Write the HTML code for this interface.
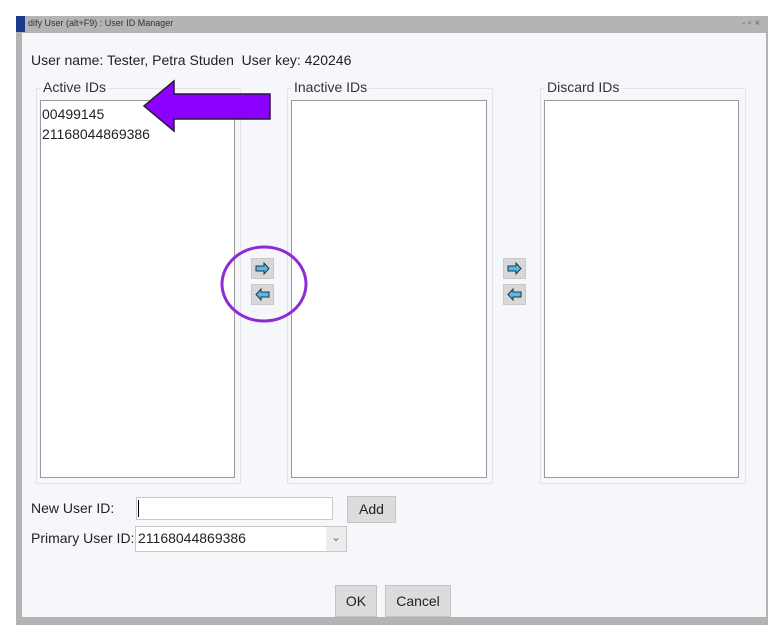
<!DOCTYPE html>
<html><head><style>
*{margin:0;padding:0;box-sizing:border-box}
body{width:775px;height:637px;background:#fff;position:relative;font-family:"Liberation Sans",sans-serif;color:#222;overflow:hidden}
.a{position:absolute}
.win{left:16px;top:16px;width:752px;height:609px;background:#b4b4b4}
.content{left:22px;top:33px;width:744px;height:584px;background:#f6f7fb}
.title{left:28px;top:18px;font-size:9px;color:#333}
.t14{font-size:14px}
.grp{border:1px solid #e2e3e8;border-radius:2px}
.lst{background:#fff;border:1px solid #9a9a9a}
.leg{background:#f6f7fb;padding:0 2px;font-size:14px;color:#333}
.btn{background:#dcdcdc;border:1px solid #c4c4c4;font-size:14px;text-align:center}
.ab{background:#d8d8d8;border:1px solid #c8c8c8;width:22px;height:20px}
</style></head><body>
<div class="a win"></div>
<div class="a" style="left:16px;top:16px;width:9px;height:16px;background:#1b3b8a"></div>
<div class="a content"></div>
<div class="a title">dify User (alt+F9) : User ID Manager</div>
<div class="a" style="left:742px;top:18px;font-size:10px;color:#666">- ▫ ×</div>
<div class="a t14" style="left:31px;top:52px">User name: Tester, Petra Studen&nbsp;&nbsp;User key: 420246</div>

<div class="a grp" style="left:36px;top:88px;width:205px;height:396px"></div>
<div class="a lst" style="left:40px;top:100px;width:195px;height:378px"></div>
<div class="a leg" style="left:41px;top:79px">Active IDs</div>
<div class="a t14" style="left:42px;top:104px;line-height:20px">00499145<br>21168044869386</div>

<div class="a grp" style="left:287px;top:88px;width:206px;height:396px"></div>
<div class="a lst" style="left:291px;top:100px;width:196px;height:378px"></div>
<div class="a leg" style="left:292px;top:79px">Inactive IDs</div>

<div class="a grp" style="left:540px;top:88px;width:206px;height:396px"></div>
<div class="a lst" style="left:544px;top:100px;width:195px;height:378px"></div>
<div class="a leg" style="left:545px;top:79px">Discard IDs</div>

<svg class="a" style="left:0;top:0" width="775" height="637">
<defs>
<g id="r"><rect x="0.5" y="0.5" width="22" height="20" fill="#d8d8d8" stroke="#c8c8c8"/><path d="M5 8h8v-3l5 5.5-5 5.5v-3h-8z" fill="#5ab8e6" stroke="#234" stroke-width="1"/></g>
<g id="l"><rect x="0.5" y="0.5" width="22" height="20" fill="#d8d8d8" stroke="#c8c8c8"/><path d="M18 8h-8v-3l-5 5.5 5 5.5v-3h8z" fill="#5ab8e6" stroke="#234" stroke-width="1"/></g>
</defs>
<use href="#r" x="251" y="258"/><use href="#l" x="251" y="284"/>
<use href="#r" x="503" y="258"/><use href="#l" x="503" y="284"/>
<ellipse cx="264" cy="284" rx="42" ry="37" fill="none" stroke="#8e2bd4" stroke-width="3"/>
<path d="M144 106 L174 81 L174 94 L270 94 L270 119 L174 119 L174 131 Z" fill="#8c00ff" stroke="#2a1a3a" stroke-width="1.5"/>
</svg>

<div class="a t14" style="left:31px;top:500px">New User ID:</div>
<div class="a" style="left:136px;top:497px;width:197px;height:23px;background:#fff;border:1px solid #c8c8c8"></div>
<div class="a" style="left:138px;top:500px;width:1px;height:17px;background:#000"></div>
<div class="a btn" style="left:347px;top:496px;width:49px;height:27px;line-height:25px">Add</div>
<div class="a t14" style="left:31px;top:530px">Primary User ID:</div>
<div class="a" style="left:135px;top:526px;width:212px;height:26px;background:#fff;border:1px solid #c8c8c8"></div>
<div class="a" style="left:326px;top:527px;width:20px;height:24px;background:#ececec"></div>
<div class="a t14" style="left:138px;top:530px">21168044869386</div>
<div class="a" style="left:331px;top:530px;font-size:12px;color:#777">⌄</div>
<div class="a btn" style="left:335px;top:585px;width:42px;height:32px;line-height:30px">OK</div>
<div class="a btn" style="left:385px;top:585px;width:66px;height:32px;line-height:30px">Cancel</div>
</body></html>
